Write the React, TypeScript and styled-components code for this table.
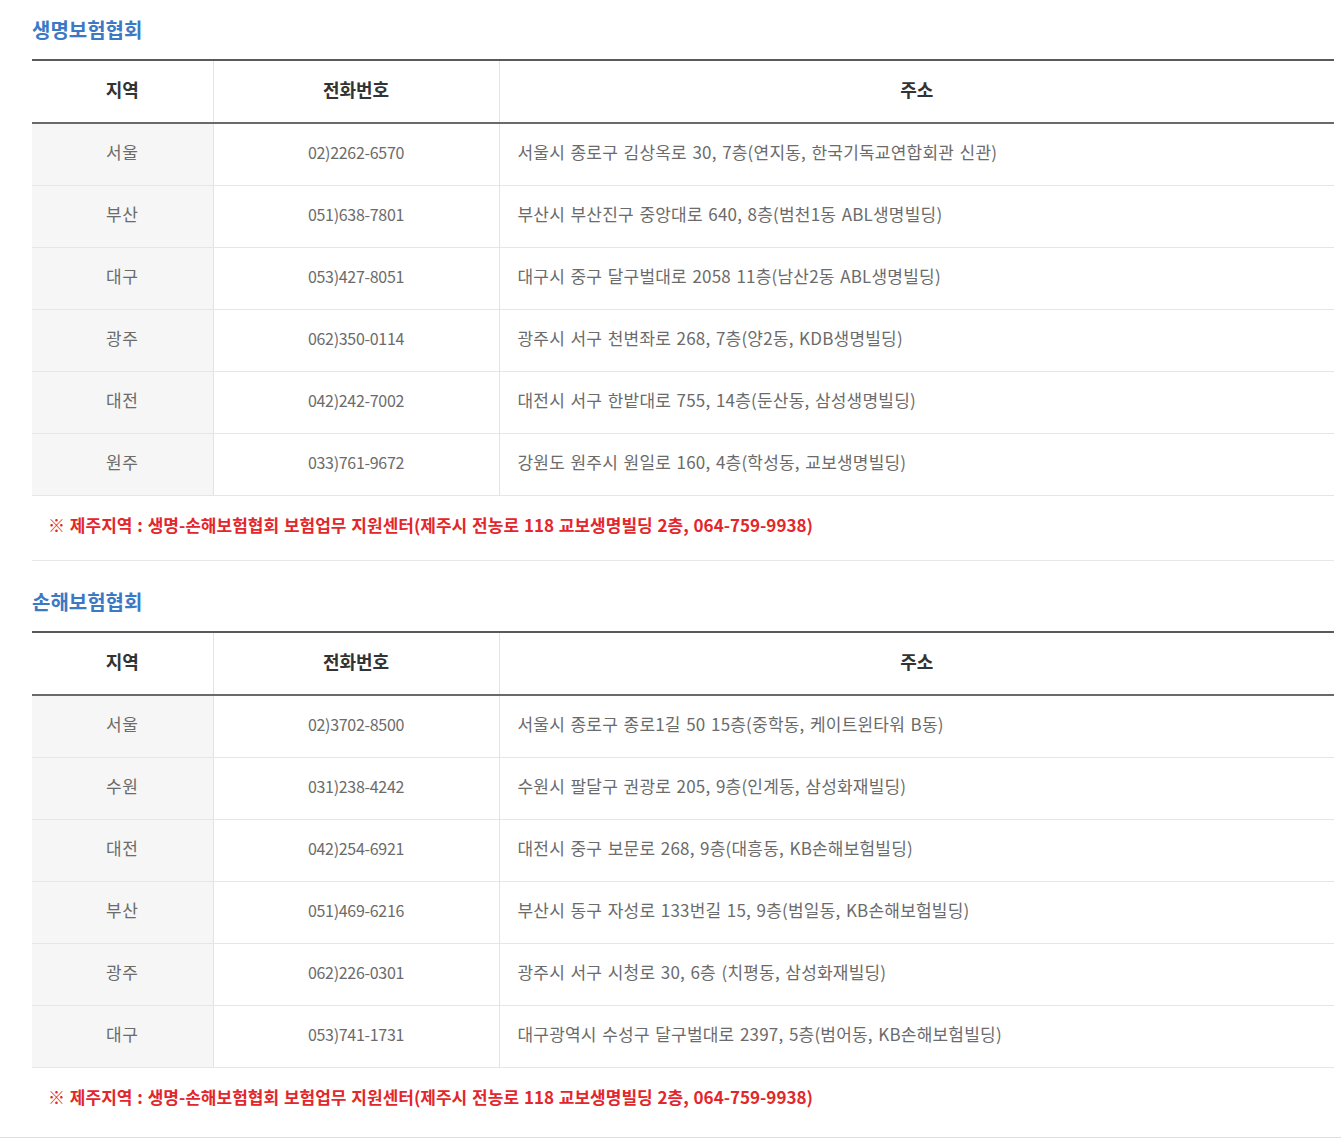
import React from "react";
import styled, { createGlobalStyle } from "styled-components";

const GlobalStyle = createGlobalStyle`
  html, body {
    margin: 0;
    padding: 0;
    background: #ffffff;
    overflow: hidden;
  }
  body {
    font-family: "Noto Sans CJK KR", "Noto Sans", sans-serif;
  }
`;

type Row = { region: string; phone: string; address: string };

const life: Row[] = [
  { region: "서울", phone: "02)2262-6570", address: "서울시 종로구 김상옥로 30, 7층(연지동, 한국기독교연합회관 신관)" },
  { region: "부산", phone: "051)638-7801", address: "부산시 부산진구 중앙대로 640, 8층(범천1동 ABL생명빌딩)" },
  { region: "대구", phone: "053)427-8051", address: "대구시 중구 달구벌대로 2058 11층(남산2동 ABL생명빌딩)" },
  { region: "광주", phone: "062)350-0114", address: "광주시 서구 천변좌로 268, 7층(양2동, KDB생명빌딩)" },
  { region: "대전", phone: "042)242-7002", address: "대전시 서구 한밭대로 755, 14층(둔산동, 삼성생명빌딩)" },
  { region: "원주", phone: "033)761-9672", address: "강원도 원주시 원일로 160, 4층(학성동, 교보생명빌딩)" },
];

const nonLife: Row[] = [
  { region: "서울", phone: "02)3702-8500", address: "서울시 종로구 종로1길 50 15층(중학동, 케이트윈타워 B동)" },
  { region: "수원", phone: "031)238-4242", address: "수원시 팔달구 권광로 205, 9층(인계동, 삼성화재빌딩)" },
  { region: "대전", phone: "042)254-6921", address: "대전시 중구 보문로 268, 9층(대흥동, KB손해보험빌딩)" },
  { region: "부산", phone: "051)469-6216", address: "부산시 동구 자성로 133번길 15, 9층(범일동, KB손해보험빌딩)" },
  { region: "광주", phone: "062)226-0301", address: "광주시 서구 시청로 30, 6층 (치평동, 삼성화재빌딩)" },
  { region: "대구", phone: "053)741-1731", address: "대구광역시 수성구 달구벌대로 2397, 5층(범어동, KB손해보험빌딩)" },
];

const NOTE =
  "※ 제주지역 : 생명-손해보험협회 보험업무 지원센터(제주시 전농로 118 교보생명빌딩 2층, 064-759-9938)";

type Kind = "region" | "phone" | "address";

const Page = styled.div`
  width: 100%;
  display: flex;
  flex-direction: column;
`;

const Content = styled.div`
  padding: 18px 7px 0 32px;
  display: flex;
  flex-direction: column;
  gap: 29px;
`;

const Section = styled.section`
  display: flex;
  flex-direction: column;
`;

const Title = styled.h2`
  margin: 0 0 17px 0;
  font-size: 20px;
  line-height: 24px;
  font-weight: 700;
  letter-spacing: 0;
  color: #3b79c4;
`;

const Table = styled.table`
  width: 100%;
  border-collapse: collapse;
  table-layout: fixed;
  border-top: 2px solid #5a5a5a;
`;

const HeadCell = styled.th`
  padding: 16px 0 21px 0;
  line-height: 24px;
  font-size: 18px;
  font-weight: 700;
  letter-spacing: 0;
  color: #333333;
  text-align: center;
  vertical-align: middle;
  border-bottom: 2px solid #6a6a6a;
  & + & {
    border-left: 1px solid #e3e3e3;
  }
`;

const BodyRow = styled.tr`
  border-bottom: 1px solid #e6e6e6;
`;

const Cell = styled.td<{ $kind: Kind }>`
  padding: 16px ${(p) => (p.$kind === "address" ? "18px" : "0")} 21px;
  line-height: 24px;
  font-size: ${(p) => (p.$kind === "phone" ? "16px" : "17px")};
  letter-spacing: ${(p) =>
    p.$kind === "phone" ? "-0.3px" : p.$kind === "region" ? "0.5px" : "0.2px"};
  word-spacing: ${(p) => (p.$kind === "address" ? "1.5px" : "0")};
  color: #6b6b6b;
  text-align: ${(p) => (p.$kind === "address" ? "left" : "center")};
  vertical-align: middle;
  white-space: nowrap;
  background: ${(p) => (p.$kind === "region" ? "#f6f6f6" : "#ffffff")};
  & + & {
    border-left: 1px solid #e3e3e3;
  }
`;

const Note = styled.p<{ $last?: boolean }>`
  margin: 0;
  padding: 17px 16px 23px 16px;
  line-height: 24px;
  font-size: 17px;
  font-weight: 700;
  letter-spacing: 0;
  word-spacing: 1px;
  white-space: nowrap;
  color: #e3262b;
  border-bottom: ${(p) => (p.$last ? "none" : "1px solid #e8e8e8")};
`;

const Divider = styled.div`
  margin-top: 5px;
  height: 0;
  border-top: 1px solid #dedede;
`;

function InfoTable({ title, rows, last }: { title: string; rows: Row[]; last?: boolean }) {
  return (
    <Section>
      <Title>{title}</Title>
      <Table>
        <colgroup>
          <col style={{ width: 181 }} />
          <col style={{ width: 286 }} />
          <col />
        </colgroup>
        <thead>
          <tr>
            <HeadCell>지역</HeadCell>
            <HeadCell>전화번호</HeadCell>
            <HeadCell>주소</HeadCell>
          </tr>
        </thead>
        <tbody>
          {rows.map((r) => (
            <BodyRow key={r.region + r.phone}>
              <Cell $kind="region">{r.region}</Cell>
              <Cell $kind="phone">{r.phone}</Cell>
              <Cell $kind="address">{r.address}</Cell>
            </BodyRow>
          ))}
        </tbody>
      </Table>
      <Note $last={last}>{NOTE}</Note>
    </Section>
  );
}

export default function App() {
  return (
    <Page>
      <GlobalStyle />
      <Content>
        <InfoTable title="생명보험협회" rows={life} />
        <InfoTable title="손해보험협회" rows={nonLife} last />
      </Content>
      <Divider />
    </Page>
  );
}
